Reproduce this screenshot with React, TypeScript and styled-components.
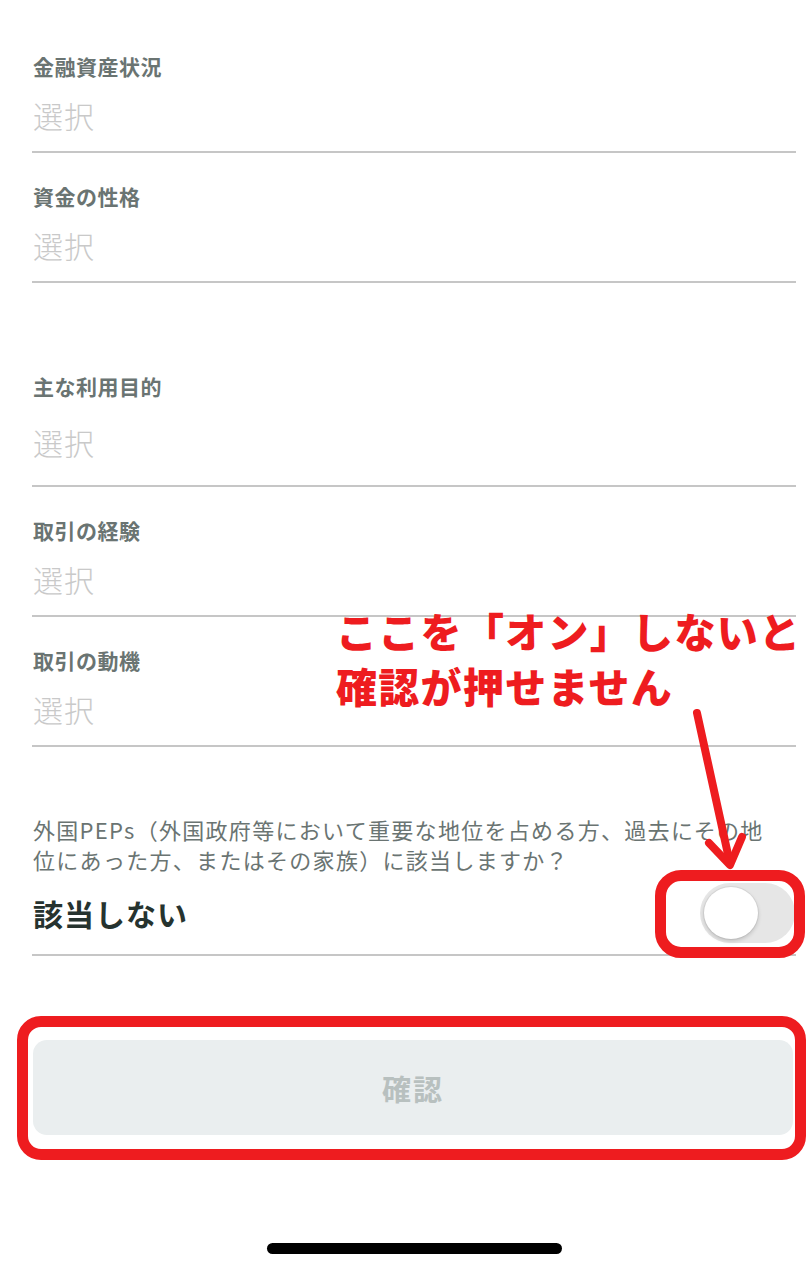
import React from 'react';
import styled, { createGlobalStyle } from 'styled-components';

const GlobalStyle = createGlobalStyle`
  html, body {
    margin: 0;
    padding: 0;
    background: #ffffff;
  }
  body {
    font-family: "Noto Sans CJK JP", "Noto Sans", sans-serif;
    -webkit-font-smoothing: antialiased;
  }
`;

const fields = [
  { label: '金融資産状況' },
  { label: '資金の性格' },
  { label: '主な利用目的', roomy: true, spaced: true },
  { label: '取引の経験' },
  { label: '取引の動機' },
];

const App = () => {
  return (
    <>
      <GlobalStyle />
      <Page>
        {fields.map((f) => (
          <Field key={f.label} $roomy={!!f.roomy} $spaced={!!f.spaced}>
            <FieldLabel>{f.label}</FieldLabel>
            <FieldValue>選択</FieldValue>
          </Field>
        ))}

        <PepSection>
          <PepQuestion>
            外国PEPs（外国政府等において重要な地位を占める方、過去にその地
            <br />
            位にあった方、またはその家族）に該当しますか？
          </PepQuestion>
          <PepRow>
            <PepAnswer>該当しない</PepAnswer>
            <ToggleWrap>
              <Toggle role="switch" aria-checked="false">
                <Knob />
              </Toggle>
            </ToggleWrap>
          </PepRow>
        </PepSection>

        <ConfirmWrap>
          <ConfirmButton disabled>確認</ConfirmButton>
        </ConfirmWrap>

        <HomeIndicator />

        {/* 注釈（赤文字と矢印） */}
        <Note>
          ここを「オン」しないと
          <br />
          確認が押せません
        </Note>
        <Arrow width="80" height="170" viewBox="0 0 80 170">
          <path
            d="M17 6 L49 152"
            stroke="#ee1c1f"
            strokeWidth="8"
            strokeLinecap="round"
            fill="none"
          />
          <path
            d="M29 136 L50 158 L62 130"
            stroke="#ee1c1f"
            strokeWidth="8"
            strokeLinecap="round"
            strokeLinejoin="round"
            fill="none"
          />
        </Arrow>
      </Page>
    </>
  );
};

const Page = styled.main`
  position: relative;
  width: 808px;
  box-sizing: border-box;
  padding: 23px 12px 16px 32px;
  display: flex;
  flex-direction: column;
`;

const Field = styled.div<{ $roomy: boolean; $spaced: boolean }>`
  display: flex;
  flex-direction: column;
  gap: ${(p) => (p.$roomy ? '21px' : '14px')};
  padding: 28px 0 ${(p) => (p.$roomy ? '23px' : '16px')} 1px;
  margin-top: ${(p) => (p.$spaced ? '60px' : '0')};
  border-bottom: 2px solid #c6c6c6;
`;

const FieldLabel = styled.div`
  font-size: 21px;
  line-height: 30px;
  font-weight: 700;
  color: #6a7472;
  letter-spacing: 0.5px;
`;

const FieldValue = styled.div`
  font-size: 30px;
  line-height: 40px;
  font-weight: 300;
  color: #c9c9c9;
  letter-spacing: 1px;
`;

const PepSection = styled.section`
  display: flex;
  flex-direction: column;
  gap: 9px;
  padding: 67px 0 11px 1px;
  border-bottom: 2px solid #c6c6c6;
`;

const PepQuestion = styled.p`
  margin: 0;
  font-size: 22px;
  line-height: 30px;
  color: #6a7472;
  letter-spacing: 1.3px;
  white-space: nowrap;
`;

const PepRow = styled.div`
  display: flex;
  align-items: center;
  justify-content: space-between;
`;

const PepAnswer = styled.div`
  font-size: 30px;
  line-height: 40px;
  font-weight: 700;
  color: #26332f;
  letter-spacing: 1px;
`;

const ToggleWrap = styled.div`
  position: relative;
  margin-right: 1px;

  &::after {
    content: '';
    position: absolute;
    top: -13px;
    left: -45px;
    right: -10px;
    bottom: -15px;
    border: 11px solid #ee1c1f;
    border-radius: 26px;
    pointer-events: none;
  }
`;

const Toggle = styled.div`
  width: 95px;
  height: 60px;
  border-radius: 30px;
  background: #e6e6e6;
  box-sizing: border-box;
  padding: 4px;
  display: flex;
  align-items: center;
`;

const Knob = styled.div`
  width: 54px;
  height: 52px;
  border-radius: 50%;
  background: #ffffff;
  box-shadow: 0 2px 4px rgba(0, 0, 0, 0.18), 0 0 0 1px rgba(0, 0, 0, 0.05);
`;

const ConfirmWrap = styled.div`
  position: relative;
  margin: 84px 3px 0 1px;

  &::before {
    content: '';
    position: absolute;
    top: -24px;
    left: -16px;
    right: -13px;
    bottom: -25px;
    border: 11px solid #ee1c1f;
    border-radius: 24px;
    pointer-events: none;
  }
`;

const ConfirmButton = styled.button`
  width: 100%;
  height: 95px;
  border: none;
  border-radius: 14px;
  background: #eaeeef;
  color: #b8c0bf;
  font-family: inherit;
  font-size: 29px;
  font-weight: 700;
  letter-spacing: 2px;
  cursor: default;
`;

const HomeIndicator = styled.div`
  align-self: center;
  width: 295px;
  height: 11px;
  margin-top: 108px;
  border-radius: 6px;
  background: #000000;
`;

const Note = styled.div`
  position: absolute;
  top: 603px;
  left: 336px;
  font-size: 41px;
  line-height: 55px;
  font-weight: 900;
  color: #ee1c1f;
  letter-spacing: 1.3px;
  white-space: nowrap;
`;

const Arrow = styled.svg`
  position: absolute;
  top: 707px;
  left: 680px;
  overflow: visible;
`;

export default App;
